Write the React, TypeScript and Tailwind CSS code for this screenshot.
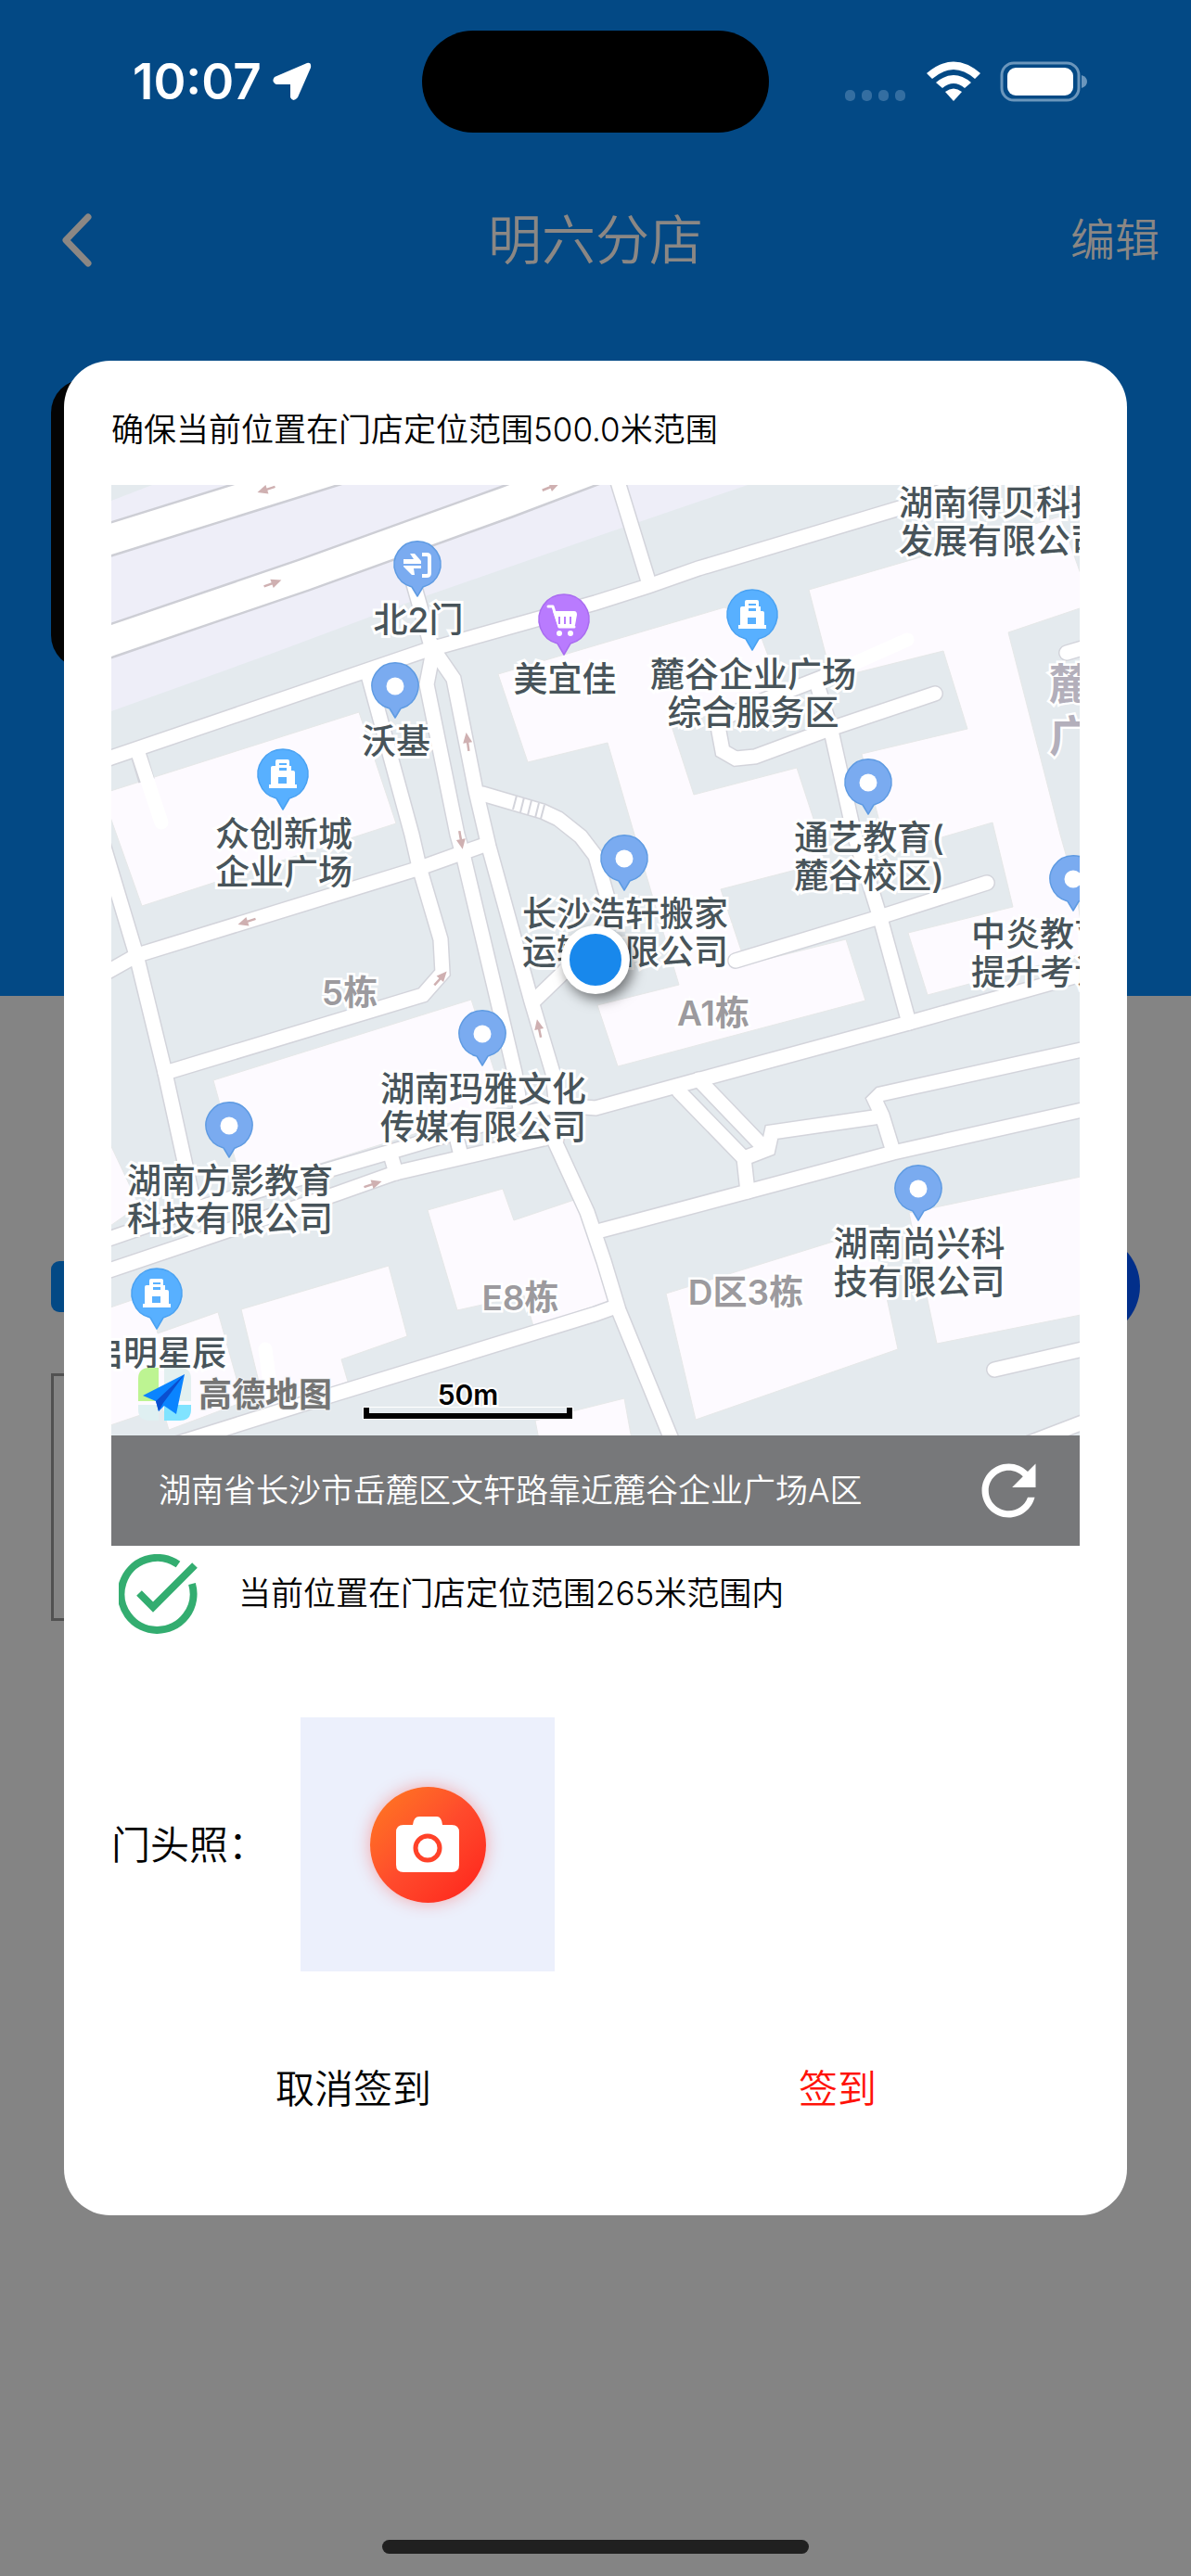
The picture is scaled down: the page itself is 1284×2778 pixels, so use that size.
import { MdRefresh } from "react-icons/md";

type PinKind = "dot" | "gate" | "shop" | "building";

interface Place {
  x: number;
  y: number;
  kind: PinKind;
  lines: string[];
}

interface Arrow {
  x: number;
  y: number;
  angle: number;
}

// All map coordinates share the same space as the svg viewBox.
const MAP_X = 120;
const MAP_Y = 523;

const PLACES: Place[] = [
  { x: 450, y: 609, kind: "gate", lines: ["北2门"] },
  { x: 426, y: 740, kind: "dot", lines: ["沃基"] },
  { x: 608, y: 668, kind: "shop", lines: ["美宜佳"] },
  { x: 811, y: 663, kind: "building", lines: ["麓谷企业广场", "综合服务区"] },
  { x: 305, y: 835, kind: "building", lines: ["众创新城", "企业广场"] },
  { x: 936, y: 844, kind: "dot", lines: ["通艺教育(", "麓谷校区)"] },
  { x: 673, y: 926, kind: "dot", lines: ["长沙浩轩搬家", "运输有限公司"] },
  { x: 1157, y: 948, kind: "dot", lines: ["中炎教育学历", "提升考试中心"] },
  { x: 520, y: 1115, kind: "dot", lines: ["湖南玛雅文化", "传媒有限公司"] },
  { x: 247, y: 1214, kind: "dot", lines: ["湖南方影教育", "科技有限公司"] },
  { x: 990, y: 1282, kind: "dot", lines: ["湖南尚兴科", "技有限公司"] },
  { x: 169, y: 1395, kind: "building", lines: ["启明星辰"] },
];

const BLOCKS = [
  { x: 377, y: 1070, name: "5栋" },
  { x: 769, y: 1092, name: "A1栋" },
  { x: 561, y: 1399, name: "E8栋" },
  { x: 804, y: 1393, name: "D区3栋" },
];

const ARROWS: Arrow[] = [
  { x: 287, y: 528, angle: 162 },
  { x: 594, y: 525, angle: -22 },
  { x: 294, y: 629, angle: -20 },
  { x: 504, y: 800, angle: -98 },
  { x: 497, y: 906, angle: 80 },
  { x: 266, y: 994, angle: 162 },
  { x: 475, y: 1055, angle: -48 },
  { x: 581, y: 1109, angle: -102 },
  { x: 402, y: 1277, angle: -18 },
];

const BUILDINGS = [
  "537,727 781,655 815,672 828,707 840,750 724,783 748,857 859,828 877,883 889,930 777,959 804,1040 912,1013 933,1079 666,1150 644,1084 732,1062 703,965 655,801 569,822",
  "872,636 1143,557 1170,633 1170,654 1087,682 1143,900 1160,960 1170,1028 1113,1043 1000,1073 979,1006 1092,978 1070,887 957,920 929,813 1043,786 1017,702 897,732",
  "116,854 387,768 427,888 153,977 116,873",
  "230,1165 508,1078 545,1192 262,1281",
  "116,1228 150,1300 116,1324",
  "461,1305 542,1282 554,1316 622,1293 658,1403 575,1430 565,1397 493,1413",
  "260,1412 419,1365 439,1441 368,1466 375,1490 287,1523",
  "116,1411 160,1396 170,1438 235,1415 262,1512 182,1542 175,1518 116,1538",
  "718,1395 940,1326 968,1455 750,1531",
  "980,1308 1170,1268 1170,1417 1010,1449",
  "577,1532 673,1508 681,1552 581,1552",
];

const STREETS = [
  "M100 824L120 817L457 702L642 650L699 632L753 613L970 548L1070 508",
  "M660 500L700 630",
  "M446 630L465 697",
  "M467 702L460 738L493 900L500 925L555 1157L561 1196",
  "M467 700L489 732L513 853L527 913L573 1080L596 1157L602 1215L599 1233L633 1307L651 1360L667 1413L728 1562",
  "M100 1057L148 1030L450 937L520 912",
  "M108 900L147 1030L178 1157L209 1298",
  "M178 1157L456 1073L477 1049L475 1013L452 935L444 900L397 728",
  "M520 856L585 875L602 883L626 902L642 923L654 965L650 1000L606 1050L577 1078",
  "M100 1342L213 1303L418 1243L557 1202L606 1192L642 1195L744 1167L980 1103L1180 1047",
  "M100 1376L364 1287L426 1265L590 1227L602 1215",
  "M421 1245L427 1265",
  "M492 1226L497 1246",
  "M881 738L896 788L921 900L949 990L980 1103",
  "M793 1036L945 990L1064 952",
  "M888 730L806 762L773 778L779 810L793 818L814 816L892 787L1008 748",
  "M1190 692L1150 704",
  "M1180 1129L949 1180L943 1186L951 1203L963 1242",
  "M644 1328L806 1285L963 1243L1180 1194",
  "M949 1204L832 1221L828 1239L802 1249L806 1285",
  "M732 1177L802 1249",
  "M753 1164L824 1238",
  "M190 1557L362 1503L642 1417L664 1409",
  "M1180 1452L1072 1477",
  "M1180 1529L1110 1556",
];

const BIG_ROADS = [
  "M60 600L400 494",
  "M60 712L120 691L328 620L547 541L700 483",
];

function BuildingGlyph() {
  return (
    <path
      fill="#fff"
      fillRule="evenodd"
      d="M-6 -16H5Q7 -16 7 -14V-9H9V-4H11Q13 -4 13 -2V11H15V15H-15V11H-13V-7Q-13 -9 -11 -9H-8V-14Q-8 -16 -6 -16ZM-4 -12V-10H4V-12ZM-4 -7V-4H4V-7ZM-5 3V10H4V3Z"
    />
  );
}

function ShopGlyph() {
  return (
    <g>
      <path d="M-17 -14h5l7 22h16" fill="none" stroke="#fff" strokeWidth="3" strokeLinecap="round" strokeLinejoin="round" />
      <path d="M-12 -9h23q3 0 3 4l-2 11q-1 3-4 3h-14z" fill="#fff" />
      <path d="M-5 -3v8M1 -3v8M7 -3v8" stroke="#b97bfe" strokeWidth="2" />
      <circle cx="-5" cy="15" r="3" fill="#fff" />
      <circle cx="7" cy="15" r="3" fill="#fff" />
    </g>
  );
}

function GateGlyph() {
  return (
    <g>
      <path d="M5 -11h5q3 0 3 3v17q0 3-3 3H5" fill="none" stroke="#fff" strokeWidth="4" />
      <path d="M-15 -3V-6H-4L-8 -12H-3L4 -4V-1H-15ZM4 1V4H-4L-3 11H-6L-15 2V1Z" fill="#fff" />
    </g>
  );
}

function Pin({ x, y, kind }: Place) {
  const large = kind === "shop" || kind === "building";
  const fill = kind === "shop" ? "#b97bfe" : large ? "#58b0ff" : "#7aabf0";
  const stroke = kind === "shop" ? "#a96cf0" : large ? "#4aa2f2" : "#5f9be2";
  const shape = large
    ? "M0 38L-7 26A27 27 0 1 1 7 26Z"
    : "M0 34L-6 24A25 25 0 1 1 6 24Z";
  return (
    <g transform={`translate(${x} ${y})`}>
      <path d={shape} fill={fill} stroke={stroke} strokeWidth="1.5" strokeLinejoin="round" />
      {kind === "dot" && <circle r="9.5" fill="#fff" />}
      {kind === "gate" && <GateGlyph />}
      {kind === "shop" && <ShopGlyph />}
      {kind === "building" && <BuildingGlyph />}
    </g>
  );
}

function MapDrawing() {
  return (
    <svg viewBox="120 523 1044 1025" preserveAspectRatio="xMinYMin slice" className="block h-full w-full" aria-hidden="true">
      <rect x="120" y="523" width="1044" height="1025" fill="#e4eaee" />
      <path d="M120 767L287 707L461 642L642 579L806 523H164L120 540Z" fill="#eeeef8" />
      <g fill="#fdfaff" stroke="#e6e8e8" strokeWidth="1">
        {BUILDINGS.map((points) => <polygon key={points} points={points} />)}
      </g>
      <g fill="none" stroke="#cdced5">
        {BIG_ROADS.map((d) => <path key={d} d={d} strokeWidth="37" />)}
      </g>
      <g fill="none" stroke="#d3d4db" strokeWidth="18" strokeLinecap="round">
        {STREETS.map((d) => <path key={d} d={d} />)}
        <path d="M149 812L158 842" strokeLinecap="butt" />
      </g>
      <g fill="none" stroke="#fff">
        {BIG_ROADS.map((d) => <path key={d} d={d} strokeWidth="32" />)}
      </g>
      <g fill="none" stroke="#fff" strokeWidth="15" strokeLinecap="round">
        {STREETS.map((d) => <path key={d} d={d} />)}
        <path d="M149 812L174 887M286 1455L293 1507M978 690L888 730" />
      </g>
      <path d="M557 858l-4 15M565 860l-4 16M573 863l-4 16M581 866l-4 16M587 868l-4 15" stroke="#d3d4db" strokeWidth="2" />
      {ARROWS.map((a) => (
        <g key={`${a.x}-${a.y}`} transform={`translate(${a.x} ${a.y}) rotate(${a.angle})`}>
          <path d="M-10 0H2" stroke="#cfb0b1" strokeWidth="2.5" />
          <path d="M10 0L-1 -5V5Z" fill="#cfb0b1" />
        </g>
      ))}
      {PLACES.map((p) => <Pin key={p.lines[0]} {...p} />)}
    </svg>
  );
}

function AmapLogo() {
  return (
    <div className="absolute bottom-4 left-[29px] flex items-center gap-[8px]">
      <svg viewBox="0 0 57 57" className="size-[57px]" aria-hidden="true">
        <path d="M12 0H22V36H0V12Q0 0 12 0Z" fill="#bdf492" />
        <path d="M28 0H45Q57 0 57 12V36H28Z" fill="#e3f0f0" />
        <path d="M0 40H22V57H12Q0 57 0 45Z" fill="#dff0f2" />
        <path d="M28 40H57V45Q57 57 45 57H28Z" fill="#80e3ff" />
        <path d="M50 7L5 30L19 36L22 47L28 41L41 50Z" fill="#0a84ff" />
        <path d="M50 7L19 36L22 47L27 38Z" fill="#0b4fd0" />
      </svg>
      <span className="text-[36px] leading-[40px] font-bold text-[#747474] [paint-order:stroke_fill] [-webkit-text-stroke:2px_#f2f4f6]">高德地图</span>
    </div>
  );
}

function StoreMap() {
  return (
    <div className="relative h-[1025px] w-full overflow-hidden">
      <MapDrawing />
      <div className="absolute top-0 left-0 size-0 whitespace-nowrap [paint-order:stroke_fill]">
        {BLOCKS.map((b) => (
          <span
            key={b.name}
            className="absolute -translate-x-1/2 -translate-y-1/2 text-[37px] leading-[41px] font-semibold text-[#9c9a9e] [-webkit-text-stroke:5px_#fff]"
            style={{ left: b.x - MAP_X, top: b.y - MAP_Y }}
          >
            {b.name}
          </span>
        ))}
        <span className="absolute top-[186px] left-[1011px] text-[46px] leading-[56px] font-bold text-[#b3afbb] [-webkit-text-stroke:5px_#fff]">
          麓谷<br />广场
        </span>
        <span className="absolute top-[-1px] left-[849px] text-[37px] leading-[41px] font-medium text-[#48545a] [-webkit-text-stroke:6px_#fff]">
          湖南得贝科技<br />发展有限公司
        </span>
        {PLACES.map((p) => (
          <span
            key={p.lines[0]}
            className="absolute -translate-x-1/2 text-center text-[37px] leading-[41px] font-medium text-[#48545a] [-webkit-text-stroke:6px_#fff]"
            style={{ left: p.x - MAP_X + 1, top: p.y - MAP_Y + (p.kind === "shop" || p.kind === "building" ? 44 : 39) }}
          >
            {p.lines.map((line) => <span key={line} className="block">{line}</span>)}
          </span>
        ))}
      </div>
      <AmapLogo />
      <div className="absolute bottom-[18px] left-[272px] w-[225px] text-center">
        <p className="text-[30px] leading-[28px] font-semibold text-black [paint-order:stroke_fill] [-webkit-text-stroke:4px_#fff]">50m</p>
        <div className="h-3 border-x-6 border-b-6 border-black shadow-[0_0_0_1px_#fff]" />
      </div>
      <span className="absolute top-[475px] left-[485px] size-[74px] rounded-full border-[9px] border-white bg-[#1888ec] shadow-[4px_6px_14px_rgba(0,0,0,0.5)]" />
    </div>
  );
}

function StatusBar() {
  return (
    <div className="grid h-[176px] grid-cols-[1fr_374px_1fr] items-center">
      <div className="flex items-center gap-3 pl-[143px]">
        <span className="text-[53px] leading-[60px] font-semibold text-white">10:07</span>
        <svg viewBox="0 0 42 42" className="size-[42px]" aria-hidden="true">
          <path d="M37 1Q42 0 41 6L27 38Q22 44 19 38V24H4Q-2 21 2 16Z" fill="#fff" />
        </svg>
      </div>
      <div className="h-[110px] rounded-full bg-black" />
      <div className="flex items-center justify-end pr-[112px]">
        <svg viewBox="0 0 262 44" className="h-[44px] w-[262px]" aria-hidden="true">
          <g fill="#346ea1">
            <rect x="1" y="31" width="11" height="12" rx="5" />
            <rect x="19" y="31" width="11" height="12" rx="5" />
            <rect x="37" y="31" width="11" height="12" rx="5" />
            <rect x="55" y="31" width="11" height="12" rx="5" />
          </g>
          <g fill="#fff">
            <path d="M89 13Q118 -12 147 13L141 19Q118 -1 95 19Z" />
            <path d="M99 23Q118 7 137 23L130 29Q118 19 106 29Z" />
            <path d="M109 33Q118 26 127 33L118 43Z" />
          </g>
          <rect x="170" y="2" width="83" height="40" rx="13" fill="none" stroke="#6b96bc" strokeWidth="3" />
          <rect x="176" y="7" width="71" height="30" rx="9" fill="#fff" />
          <path d="M256 15Q262 17 262 22T256 29Z" fill="#6b96bc" />
        </svg>
      </div>
    </div>
  );
}

function NavBar() {
  return (
    <div className="grid h-[166px] grid-cols-[1fr_auto_1fr] items-center px-[34px] text-[#8b8784]">
      <button type="button" aria-label="返回" className="ml-7 w-10 justify-self-start">
        <svg viewBox="0 0 40 60" className="h-[60px] w-10" aria-hidden="true">
          <path d="M33 5L9 30L33 55" fill="none" stroke="currentColor" strokeWidth="7" strokeLinecap="round" strokeLinejoin="round" />
        </svg>
      </button>
      <h1 className="text-[58px] leading-[80px] font-[350]">明六分店</h1>
      <button type="button" className="justify-self-end text-[48px] leading-[64px] font-[350]">编辑</button>
    </div>
  );
}

function CheckInDialog() {
  return (
    <section role="dialog" aria-label="门店签到" className="relative mx-[69px] mt-[47px] rounded-[50px] bg-white px-[51px] pb-[80px] text-[35px] font-[350] text-black">
      <p className="pt-[56px] pb-[42px] leading-[36px]">确保当前位置在门店定位范围500.0米范围</p>
      <StoreMap />
      <div className="flex h-[119px] items-center justify-between bg-[#77787a] pr-[33px] pl-[51px] text-white">
        <p>湖南省长沙市岳麓区文轩路靠近麓谷企业广场A区</p>
        <button type="button" aria-label="刷新位置">
          <MdRefresh className="size-[87px]" />
        </button>
      </div>
      <div className="flex h-[103px] items-center gap-[43px] pl-2">
        <svg viewBox="0 0 86 86" className="size-[86px]" fill="none" stroke="#33ad70" strokeWidth="8" aria-hidden="true">
          <path d="M64 11A39 39 0 1 0 79 32" />
          <path d="M22 42L37 57L82 12" />
        </svg>
        <p>当前位置在门店定位范围265米范围内</p>
      </div>
      <div className="mt-[82px] flex items-center gap-[36px]">
        <label htmlFor="shop-photo" className="text-[42px]">门头照：</label>
        <button id="shop-photo" type="button" aria-label="拍摄门头照" className="flex size-[274px] items-center justify-center bg-[#ecf0fc]">
          <span className="flex size-[125px] items-center justify-center rounded-full bg-linear-to-br from-[#ff7a1f] via-[#ff4a2c] to-[#ff1a1a] shadow-[0_0_18px_rgba(255,60,50,0.4)]">
            <svg viewBox="0 0 68 60" className="h-[60px] w-[68px]" aria-hidden="true">
              <path d="M18 9Q19 0 25 0H44Q49 0 50 9H60Q68 9 68 17V52Q68 60 60 60H8Q0 60 0 52V17Q0 9 8 9Z" fill="#fff" />
              <circle cx="34" cy="34" r="13" fill="none" stroke="#ff4229" strokeWidth="5" />
            </svg>
          </span>
        </button>
      </div>
      <div className="mt-[71px] grid grid-cols-2 text-[42px] leading-[112px]">
        <button type="button">取消签到</button>
        <button type="button" className="text-[#ff1208]">签到</button>
      </div>
    </section>
  );
}

// Dimmed page content that peeks out on both sides of the dialog.
function PageBehind() {
  return (
    <div className="absolute inset-0 overflow-hidden" aria-hidden="true">
      <div className="h-[1074px] bg-[#034985]" />
      <div className="absolute top-[409px] left-[55px] h-[312px] w-[300px] rounded-[36px] bg-[#040404]" />
      <div className="absolute top-[1360px] left-[55px] h-[55px] w-[40px] rounded-[9px] bg-[#034985]" />
      <div className="absolute top-[1481px] right-[55px] left-[55px] h-[267px] border-3 border-[#515151] [clip-path:inset(0_50%_0_0)]" />
      <div className="absolute top-[1331px] right-[55px] size-[112px] rounded-full bg-[#022f8a]" />
    </div>
  );
}

export default function App() {
  return (
    <main className="relative flex min-h-screen flex-col bg-[#848484] font-['Inter','Noto_Sans_CJK_SC',sans-serif]">
      <PageBehind />
      <div className="relative flex flex-1 flex-col">
        <StatusBar />
        <NavBar />
        <CheckInDialog />
        <div className="mx-auto mt-auto mb-[24px] h-[15px] w-[460px] rounded-full bg-[#202020]" />
      </div>
    </main>
  );
}
